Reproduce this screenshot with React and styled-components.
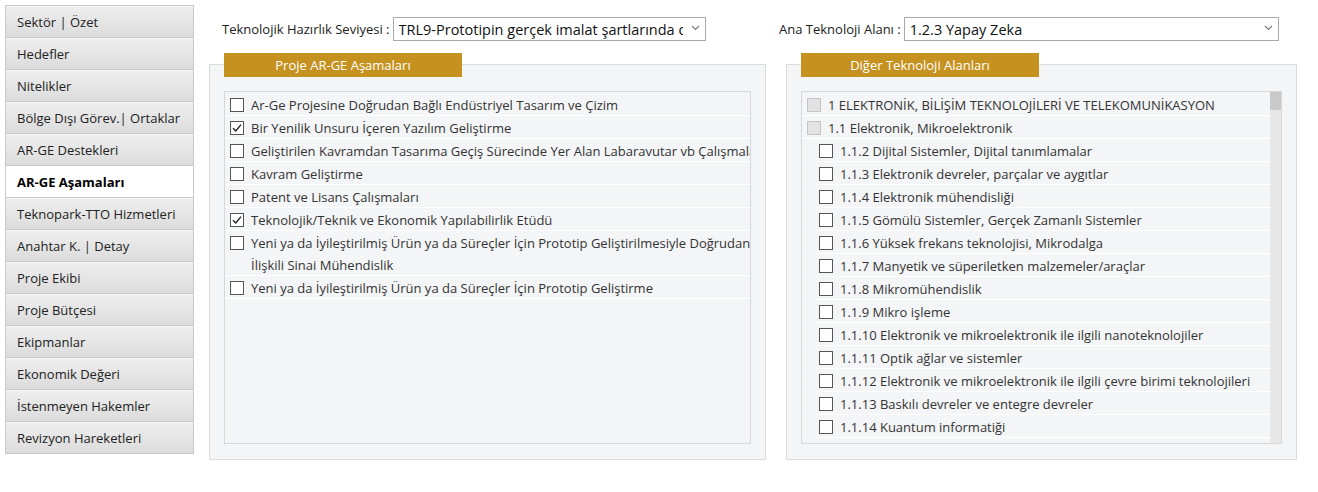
import React from 'react';
import styled, { createGlobalStyle } from 'styled-components';

const GlobalStyle = createGlobalStyle`
  * { box-sizing: border-box; }
  body {
    margin: 0;
    background: #fff;
    font-family: "Open Sans", "Noto Sans", Arial, sans-serif;
    color: #222;
  }
`;

const Page = styled.div`
  display: flex;
  align-items: flex-start;
  padding: 5px 0 0 5px;
  width: 1318px;
  height: 492px;
`;

const Sidebar = styled.nav`
  width: 189px;
  border: 1px solid #c9c9c9;
  border-bottom: none;
  display: flex;
  flex-direction: column;
`;

const NavItem = styled.div`
  height: 32px;
  display: flex;
  align-items: center;
  padding-left: 11px;
  font-size: 13px;
  border-bottom: 1px solid #c9c9c9;
  border-top: 1px solid ${p => (p.$active ? '#fff' : '#f7f7f7')};
  color: ${p => (p.$active ? '#000' : '#222')};
  font-weight: ${p => (p.$active ? 700 : 400)};
  background: ${p => (p.$active ? '#fff' : 'linear-gradient(to bottom, #eeeeee 0%, #dcdcdc 100%)')};
  white-space: nowrap;
`;

const Main = styled.div`
  margin-left: 15px;
  display: flex;
  flex-direction: column;
`;

const TopRow = styled.div`
  display: grid;
  grid-template-columns: 570px 1fr;
  height: 48px;
  padding-top: 12px;
`;

const Field = styled.label`
  display: flex;
  align-items: center;
  padding-left: ${p => p.$indent || 0}px;
  font-size: 13px;
  color: #222;
  height: 24px;
`;

const LabelText = styled.span`
  margin-right: 3px;
  white-space: nowrap;
`;

const SelectWrap = styled.div`
  position: relative;
  width: ${p => p.$width}px;
  height: 24px;
`;

const Select = styled.select`
  appearance: none;
  width: 100%;
  height: 100%;
  border: 1px solid #a9a9a9;
  border-radius: 0;
  background: #fff;
  font-family: "Open Sans", "Noto Sans", Arial, sans-serif;
  font-size: 14.5px;
  color: #111;
  padding: 0 22px 0 5px;
  outline: none;
`;

const Chevron = styled.svg`
  position: absolute;
  right: 6px;
  top: 8px;
  pointer-events: none;
`;

const Panels = styled.div`
  display: grid;
  grid-template-columns: 557px 511px;
  column-gap: 20px;
`;

const Panel = styled.section`
  margin-top: 11px;
  height: 396px;
  background: #f4f5f7;
  border: 1px solid #dcdcdc;
  padding: 0 14px 15px 14px;
  display: flex;
  flex-direction: column;
`;

const Tab = styled.div`
  margin-top: -12px;
  width: 238px;
  height: 24px;
  background: #c5911f;
  color: #fff;
  font-size: 13px;
  display: flex;
  align-items: center;
  justify-content: center;
`;

const List = styled.div`
  margin-top: 14px;
  flex: 1;
  border: 1px solid #d8d8d8;
  display: flex;
  overflow: hidden;
  background: #f4f5f7;
`;

const Rows = styled.div`
  flex: 1;
  overflow: hidden;
  display: flex;
  flex-direction: column;
  padding-top: 1px;
`;

const Row = styled.div`
  display: flex;
  align-items: flex-start;
  margin-left: ${p => p.$indent || 0}px;
  padding-left: ${p => p.$pad || 5}px;
  border-bottom: 1px solid #fff;
  font-size: 13px;
  color: #333;
  flex-shrink: 0;
`;

const RowText = styled.span`
  white-space: nowrap;
  line-height: 22px;
  padding-top: 1px;
  margin-bottom: -1px;
`;

const Box = styled.span`
  flex-shrink: 0;
  width: 14px;
  height: 14px;
  margin: 5px 7px 0 0;
  border: 1px solid ${p => (p.$disabled ? '#c6c6c6' : '#555')};
  background: ${p => (p.$disabled ? '#e2e2e2' : '#fff')};
  display: flex;
  align-items: center;
  justify-content: center;
`;

const Scrollbar = styled.div`
  width: 11px;
  background: #e7e7e7;
  display: flex;
  flex-direction: column;
`;

const Thumb = styled.div`
  height: 18px;
  background: #c9c9c9;
`;

const Check = ({ checked, disabled }) => (
  <Box $disabled={disabled}>
    {checked && (
      <svg width="12" height="12" viewBox="0 0 12 12">
        <polyline points="2,6.2 4.8,9 10,2.6" fill="none" stroke="#222" strokeWidth="1.4" />
      </svg>
    )}
  </Box>
);

const navItems = [
  'Sektör | Özet',
  'Hedefler',
  'Nitelikler',
  'Bölge Dışı Görev.| Ortaklar',
  'AR-GE Destekleri',
  'AR-GE Aşamaları',
  'Teknopark-TTO Hizmetleri',
  'Anahtar K. | Detay',
  'Proje Ekibi',
  'Proje Bütçesi',
  'Ekipmanlar',
  'Ekonomik Değeri',
  'İstenmeyen Hakemler',
  'Revizyon Hareketleri',
];

const stages = [
  { text: ['Ar-Ge Projesine Doğrudan Bağlı Endüstriyel Tasarım ve Çizim'] },
  { text: ['Bir Yenilik Unsuru İçeren Yazılım Geliştirme'], checked: true },
  { text: ['Geliştirilen Kavramdan Tasarıma Geçiş Sürecinde Yer Alan Labaravutar vb Çalışmaları'] },
  { text: ['Kavram Geliştirme'] },
  { text: ['Patent ve Lisans Çalışmaları'] },
  { text: ['Teknolojik/Teknik ve Ekonomik Yapılabilirlik Etüdü'], checked: true },
  {
    text: [
      'Yeni ya da İyileştirilmiş Ürün ya da Süreçler İçin Prototip Geliştirilmesiyle Doğrudan',
      'İlişkili Sinai Mühendislik',
    ],
  },
  { text: ['Yeni ya da İyileştirilmiş Ürün ya da Süreçler İçin Prototip Geliştirme'] },
];

const areas = [
  { level: 0, text: '1 ELEKTRONİK, BİLİŞİM TEKNOLOJİLERİ VE TELEKOMUNİKASYON' },
  { level: 1, text: '1.1 Elektronik, Mikroelektronik' },
  { level: 2, text: '1.1.2 Dijital Sistemler, Dijital tanımlamalar' },
  { level: 2, text: '1.1.3 Elektronik devreler, parçalar ve aygıtlar' },
  { level: 2, text: '1.1.4 Elektronik mühendisliği' },
  { level: 2, text: '1.1.5 Gömülü Sistemler, Gerçek Zamanlı Sistemler' },
  { level: 2, text: '1.1.6 Yüksek frekans teknolojisi, Mikrodalga' },
  { level: 2, text: '1.1.7 Manyetik ve süperiletken malzemeler/araçlar' },
  { level: 2, text: '1.1.8 Mikromühendislik' },
  { level: 2, text: '1.1.9 Mikro işleme' },
  { level: 2, text: '1.1.10 Elektronik ve mikroelektronik ile ilgili nanoteknolojiler' },
  { level: 2, text: '1.1.11 Optik ağlar ve sistemler' },
  { level: 2, text: '1.1.12 Elektronik ve mikroelektronik ile ilgili çevre birimi teknolojileri' },
  { level: 2, text: '1.1.13 Baskılı devreler ve entegre devreler' },
  { level: 2, text: '1.1.14 Kuantum informatiği' },
  { level: 2, text: '1.1.15 Sensörler ve aktüatörler' },
];

const SelectField = ({ label, value, width, indent }) => (
  <Field $indent={indent}>
    <LabelText>{label}</LabelText>
    <SelectWrap $width={width}>
      <Select defaultValue={value}>
        <option>{value}</option>
      </Select>
      <Chevron width="9" height="6" viewBox="0 0 9 6">
        <polyline points="1,1 4.5,4.5 8,1" fill="none" stroke="#777" strokeWidth="1.1" />
      </Chevron>
    </SelectWrap>
  </Field>
);

const App = () => (
  <>
    <GlobalStyle />
    <Page>
      <Sidebar>
        {navItems.map(item => (
          <NavItem key={item} $active={item === 'AR-GE Aşamaları'}>
            {item}
          </NavItem>
        ))}
      </Sidebar>
      <Main>
        <TopRow>
          <SelectField
            indent={13}
            label="Teknolojik Hazırlık Seviyesi :"
            value="TRL9-Prototipin gerçek imalat şartlarında denenmesi"
            width={313}
          />
          <SelectField label="Ana Teknoloji Alanı :" value="1.2.3 Yapay Zeka" width={375} />
        </TopRow>
        <Panels>
          <Panel>
            <Tab>Proje AR-GE Aşamaları</Tab>
            <List>
              <Rows>
                {stages.map((s, i) => (
                  <Row key={i}>
                    <Check checked={s.checked} />
                    <RowText>
                      {s.text.map((line, j) => (
                        <React.Fragment key={j}>
                          {j > 0 && <br />}
                          {line}
                        </React.Fragment>
                      ))}
                    </RowText>
                  </Row>
                ))}
              </Rows>
            </List>
          </Panel>
          <Panel>
            <Tab>Diğer Teknoloji Alanları</Tab>
            <List>
              <Rows>
                {areas.map(a => (
                  <Row key={a.text} $indent={a.level === 2 ? 12 : 0}>
                    <Check disabled={a.level < 2} />
                    <RowText>{a.text}</RowText>
                  </Row>
                ))}
              </Rows>
              <Scrollbar>
                <Thumb />
              </Scrollbar>
            </List>
          </Panel>
        </Panels>
      </Main>
    </Page>
  </>
);

export default App;
